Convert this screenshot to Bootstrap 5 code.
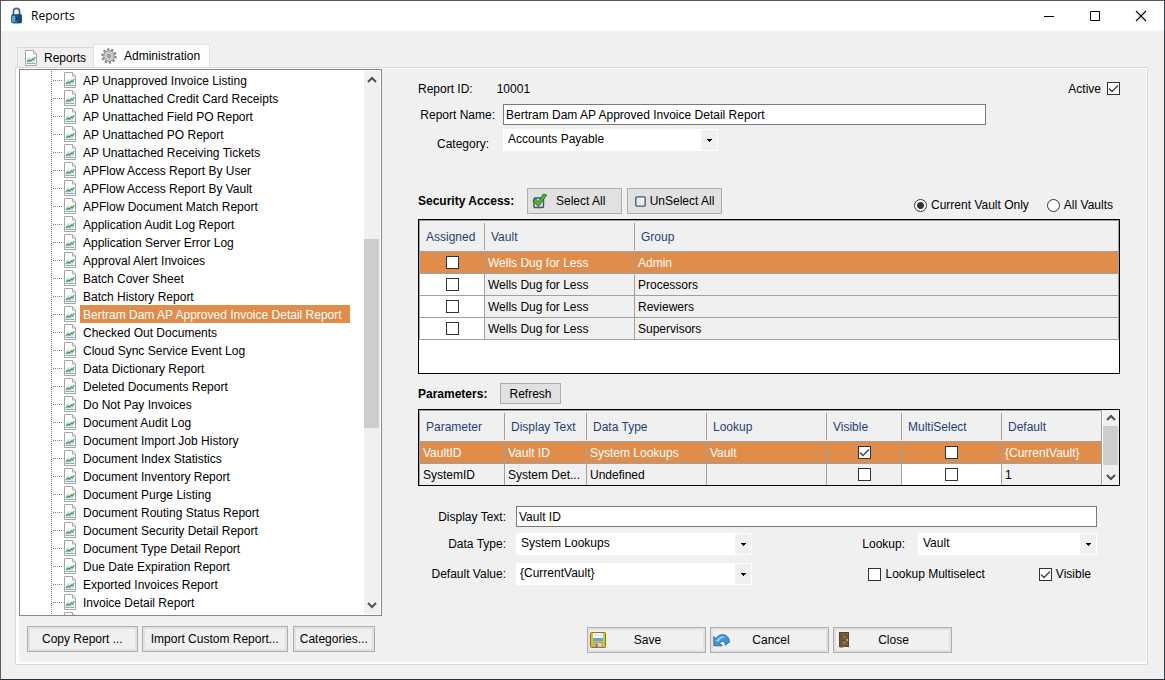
<!DOCTYPE html>
<html lang="en">
<head>
<meta charset="utf-8">
<meta name="viewport" content="width=device-width, initial-scale=1">
<title>Reports</title>
<link href="https://cdn.jsdelivr.net/npm/bootstrap@5.3.0/dist/css/bootstrap.min.css" rel="stylesheet">
<style>
:root{--face:#f0f0f0;--accent:#e08c4b;--rule:#a0a0a0}
body{font:12px/18px "Liberation Sans",Arial,sans-serif;color:#000;background:var(--face);height:100vh;overflow:hidden}
.app-window{height:100%;border:1px solid;border-color:#5b5759 #1f4260 #22343f #5f5b5e;background:var(--face)}
.title-bar{height:30px;background:#fff;padding-left:9px;font:12px/18px "Open Sans","Noto Sans",sans-serif}
.title-bar button{width:46px;height:30px;border:0;background:none;padding:0;display:flex;align-items:center;justify-content:center}
/* tabs */
.tab-strip{height:36px;padding-left:16px;border:0;flex-wrap:nowrap;align-items:flex-end}
.tab-strip .nav-link{border:1px solid #d9d9d9;border-bottom:0;border-radius:0;margin:0;color:#000;background:var(--face);height:20px;padding:0 7px;display:flex;align-items:center;gap:7px}
.tab-strip .nav-link.active{height:23px;background:#fff;color:#000;margin-left:-1px;padding:0 9px 0 7px}
.tab-body{margin:0 16px 14px 14px;border:1px solid #d9d9d9;background:var(--face);min-height:0;box-shadow:inset 3px 0 #fff,inset 0 1px #fff,inset 0 -2px #fff,inset -1px 0 #fff;padding:1px 1px 2px 3px}
/* report tree */
.side{width:363px}
.tree-box{border:1px solid #828790;background:#fff;padding:1px 1px 1px 0;min-height:0;overflow:hidden}
.tree-list{margin:0;padding:0 0 0 31px;list-style:none}
.tree-list li{height:18px;display:flex;align-items:center;padding-left:13px;background:repeating-linear-gradient(#808080 0 1px,transparent 1px 2px) 0 0/1px 100% no-repeat,repeating-linear-gradient(90deg,transparent 0 1px,#808080 1px 2px) 1px 9px/10px 1px no-repeat}
.tree-list a{color:#000;text-decoration:none;height:18px;line-height:20px;padding:0 8px 0 3px;margin-left:4px;white-space:nowrap}
.tree-list a.current{background:var(--accent);color:#fff}
.side-buttons{padding:10px 0 10px 8px}
.sbar{width:16px;background:var(--face);flex:none;display:flex;flex-direction:column}
.sbar svg{flex:none;width:16px;height:16px}
.sbar .track{flex:1;min-height:0}
.sbar .thumb{background:#cdcdcd;width:15px}
/* buttons */
.btn-cmd{border:1px solid #adadad;border-radius:0;background:#e1e1e1;color:#000;font-size:12px;line-height:18px;padding:0 6px;display:flex;align-items:center;justify-content:center;white-space:nowrap}
.btn-cmd.inset{background:var(--face);box-shadow:inset 0 0 0 2px #e1e1e1;height:26px}
.btn-cmd.wide{padding:0 14px}
.btn-cmd.mid{padding:0 8px}
.btn-cmd.tall{height:26px;width:95px}
.btn-cmd.sel{padding:0 4px;justify-content:flex-start}
.btn-cmd.small-h{height:21px;width:61px}
.btn-cmd.act{width:119px;padding:0 2px;justify-content:flex-start}
.btn-cmd.act span{flex:1;margin-right:14px}
.gap-5px{margin-left:5px}
/* fields */
.fld{border:1px solid #7a7a7a;border-radius:0;background:#fff;color:#000;font-size:12px;line-height:18px;height:21px;min-height:0;padding:0 2px}
.drop{border:1px solid #fff;border-radius:0;color:#000;font-size:12px;line-height:18px;height:22px;padding:0 20px 2px 4px;background:url("data:image/svg+xml,%3Csvg xmlns='http://www.w3.org/2000/svg' width='16' height='20'%3E%3Cpath fill='%23f0f0f0' d='M0 0h16v20H0z'/%3E%3Cpath d='M6 9h5v1h-1v1H9v1H8v-1H7v-1H6z'/%3E%3C/svg%3E") right top no-repeat #fff;background-size:16px 20px}
.drop.combo{padding-left:3px}
.tick{width:13px;height:13px;margin:0;border:1px solid #333;border-radius:0!important;background-color:#fff;flex:none;vertical-align:middle}
.tick:checked{background-color:#fff;border-color:#333;background-image:url("data:image/svg+xml,%3Csvg xmlns='http://www.w3.org/2000/svg' viewBox='0 0 11 11'%3E%3Cpath fill='none' stroke='%23444' stroke-width='1.4' d='M1 5.5 4 8.5 10 2.5'/%3E%3C/svg%3E")!important}
.dot{width:13px;height:13px;margin:0;border:1px solid #333;background-color:#fff;flex:none}
.dot:checked{background-color:#fff;border-color:#333;background-image:radial-gradient(circle,#333 3px,transparent 4px)!important}
/* detail pane */
.detail{padding:4px 26px 9px 36px;min-width:0}
.id-row{height:31px}
.active-box{gap:6px}
.l-top,.l-low{flex:none;text-align:right;white-space:nowrap}
.l-top{width:77px}
.l-low{width:88px;margin-right:10px}
.l-cat{padding:6px 6px 0 0}
.name-row{margin-right:134px}
.low-form{margin:20px 23px 0 0}
.w-cat{width:215px}.w-type{width:236px}.w-look{width:179px}
.sec-head{margin:35px 0 5px}
.sec-head b{width:109px}
.scope-all{margin-left:18px;padding-right:7px}
.par-head{margin:9px 0 5px}
.par-head b{width:82px}
.type-row{margin-top:6px}
.look-label{margin-right:13px}
.multi{margin-right:54px}
.vis{padding-right:6px}
.act-row{padding-left:1px}
/* grids */
.grid-box{border:1px solid #000;background:#fff;overflow:hidden}
.sec-box{height:155px}.par-box{height:77px}
.data-grid{width:100%;table-layout:fixed;border-collapse:separate;border-spacing:0;border-top:1px solid var(--rule);border-left:1px solid var(--rule);color:#000}
.data-grid th,.data-grid td{border-right:1px solid var(--rule);border-bottom:1px solid var(--rule);height:22px;padding:0 3px;background:var(--face);white-space:nowrap;overflow:hidden;text-overflow:ellipsis}
.data-grid th{height:31px;font-weight:400;color:#1f3f77;padding:2px 6px 0;border-right:0;background:linear-gradient(var(--rule),var(--rule)) right 2px/1px 27px no-repeat border-box var(--face)}
.data-grid th:last-child{border-right:1px solid var(--rule)}
.data-grid .pick{text-align:center;line-height:13px}
.data-grid .open{background:#fff}
.data-grid .hot td{background:var(--accent);color:#fff}
.grid-bar{width:17px}
</style>
</head>
<body>
<svg width="0" height="0" class="position-absolute" aria-hidden="true">
  <symbol id="doc" viewBox="0 0 12 16">
    <path d="M.5.5h8l3 3.500v11.500H.5z" fill="#fdfdfd" stroke="#a4a4a4"/><path d="M8.500.5v3.500h3" fill="#eee" stroke="#aaa"/>
    <path d="M2 7.500h8v6H2z" fill="#e9eef7"/>
    <path d="M2 9.500h8M2 11.500h8M4.500 7v6M7.500 7v6" stroke="#c9d3e6" stroke-width=".6"/>
    <path d="M1.500 13.500h9" stroke="#93a5d0"/>
    <path d="M2 12 4 10l1.500 1.200L7.500 9l1 .8L10.200 7" fill="none" stroke="#3f9a45" stroke-width="1.200"/>
  </symbol>
</svg>
<div class="app-window d-flex flex-column">
  <header class="title-bar d-flex align-items-center flex-shrink-0">
    <svg width="13" height="18" viewBox="0 0 13 18" aria-hidden="true"><path d="M3.500 9V4.500a3 3.200 0 0 1 6 0V9" fill="none" stroke="#4b6a80" stroke-width="1.800"/><rect x="1" y="7" width="11" height="9.500" rx="2.500" fill="#1d6699"/><path d="M2 9h3v6H2z" fill="#5aa3cf"/><path d="M8 7.500h3.500v8.500H8z" fill="#124b78"/><path d="M6 10h1.500v3H6z" fill="#0b2f4d"/></svg>
    <span class="ms-2 me-auto">Reports</span>
    <button type="button" aria-label="Minimize"><svg width="11" height="11"><path d="M0 5.500h10" stroke="#000"/></svg></button>
    <button type="button" aria-label="Maximize"><svg width="11" height="11"><path d="M.5.5h9v9h-9z" fill="none" stroke="#000"/></svg></button>
    <button type="button" aria-label="Close window"><svg width="12" height="12"><path d="M1 1l10 10M11 1 1 11" stroke="#000" stroke-width="1.100"/></svg></button>
  </header>

  <nav class="nav nav-tabs tab-strip flex-shrink-0">
    <a class="nav-link" href="#"><svg width="12" height="16"><use href="#doc"/></svg>Reports</a>
    <a class="nav-link active" href="#" aria-current="page">
      <svg width="16" height="16" viewBox="0 0 16 16" aria-hidden="true"><circle cx="8" cy="8" r="6.600" fill="none" stroke="#858585" stroke-width="2.200" stroke-dasharray="2.300 1.847"/><circle cx="8" cy="8" r="5.300" fill="#d2d2d2" stroke="#8a8a8a"/><circle cx="8" cy="8" r="3.300" fill="#efefef" stroke="#aaa" stroke-width=".8"/><circle cx="8" cy="8" r="1.600" fill="#bbb" stroke="#666" stroke-width=".8"/></svg>Administration</a>
  </nav>

  <main class="tab-body d-flex flex-grow-1">
    <section class="side d-flex flex-column flex-shrink-0">
      <div class="tree-box d-flex flex-grow-1">
        <ul class="tree-list flex-grow-1">
          <li><svg width="12" height="16"><use href="#doc"/></svg><a href="#">AP Unapproved Invoice Listing</a></li>
          <li><svg width="12" height="16"><use href="#doc"/></svg><a href="#">AP Unattached Credit Card Receipts</a></li>
          <li><svg width="12" height="16"><use href="#doc"/></svg><a href="#">AP Unattached Field PO Report</a></li>
          <li><svg width="12" height="16"><use href="#doc"/></svg><a href="#">AP Unattached PO Report</a></li>
          <li><svg width="12" height="16"><use href="#doc"/></svg><a href="#">AP Unattached Receiving Tickets</a></li>
          <li><svg width="12" height="16"><use href="#doc"/></svg><a href="#">APFlow Access Report By User</a></li>
          <li><svg width="12" height="16"><use href="#doc"/></svg><a href="#">APFlow Access Report By Vault</a></li>
          <li><svg width="12" height="16"><use href="#doc"/></svg><a href="#">APFlow Document Match Report</a></li>
          <li><svg width="12" height="16"><use href="#doc"/></svg><a href="#">Application Audit Log Report</a></li>
          <li><svg width="12" height="16"><use href="#doc"/></svg><a href="#">Application Server Error Log</a></li>
          <li><svg width="12" height="16"><use href="#doc"/></svg><a href="#">Approval Alert Invoices</a></li>
          <li><svg width="12" height="16"><use href="#doc"/></svg><a href="#">Batch Cover Sheet</a></li>
          <li><svg width="12" height="16"><use href="#doc"/></svg><a href="#">Batch History Report</a></li>
          <li><svg width="12" height="16"><use href="#doc"/></svg><a class="current" href="#">Bertram Dam AP Approved Invoice Detail Report</a></li>
          <li><svg width="12" height="16"><use href="#doc"/></svg><a href="#">Checked Out Documents</a></li>
          <li><svg width="12" height="16"><use href="#doc"/></svg><a href="#">Cloud Sync Service Event Log</a></li>
          <li><svg width="12" height="16"><use href="#doc"/></svg><a href="#">Data Dictionary Report</a></li>
          <li><svg width="12" height="16"><use href="#doc"/></svg><a href="#">Deleted Documents Report</a></li>
          <li><svg width="12" height="16"><use href="#doc"/></svg><a href="#">Do Not Pay Invoices</a></li>
          <li><svg width="12" height="16"><use href="#doc"/></svg><a href="#">Document Audit Log</a></li>
          <li><svg width="12" height="16"><use href="#doc"/></svg><a href="#">Document Import Job History</a></li>
          <li><svg width="12" height="16"><use href="#doc"/></svg><a href="#">Document Index Statistics</a></li>
          <li><svg width="12" height="16"><use href="#doc"/></svg><a href="#">Document Inventory Report</a></li>
          <li><svg width="12" height="16"><use href="#doc"/></svg><a href="#">Document Purge Listing</a></li>
          <li><svg width="12" height="16"><use href="#doc"/></svg><a href="#">Document Routing Status Report</a></li>
          <li><svg width="12" height="16"><use href="#doc"/></svg><a href="#">Document Security Detail Report</a></li>
          <li><svg width="12" height="16"><use href="#doc"/></svg><a href="#">Document Type Detail Report</a></li>
          <li><svg width="12" height="16"><use href="#doc"/></svg><a href="#">Due Date Expiration Report</a></li>
          <li><svg width="12" height="16"><use href="#doc"/></svg><a href="#">Exported Invoices Report</a></li>
          <li><svg width="12" height="16"><use href="#doc"/></svg><a href="#">Invoice Detail Report</a></li>
          <li><svg width="12" height="16"><use href="#doc"/></svg></li>
        </ul>
        <div class="sbar" aria-hidden="true">
          <svg viewBox="0 0 16 16"><path d="M4 11l4-4 4 4" fill="none" stroke="#505050" stroke-width="2"/></svg>
          <div class="track"><div style="height:29.800%"></div><div class="thumb" style="height:36.900%"></div></div>
          <svg viewBox="0 0 16 16"><path d="M4 5l4 4 4-4" fill="none" stroke="#505050" stroke-width="2"/></svg>
        </div>
      </div>
      <div class="d-flex flex-shrink-0 side-buttons">
        <button type="button" class="btn btn-cmd inset wide">Copy Report ...</button>
        <button type="button" class="btn btn-cmd inset mid ms-1">Import Custom Report...</button>
        <button type="button" class="btn btn-cmd inset gap-5px">Categories...</button>
      </div>
    </section>

    <form class="detail d-flex flex-column flex-grow-1">
      <div class="d-flex align-items-center id-row">
        <span>Report ID:</span><output class="ms-4">10001</output>
        <label class="ms-auto d-flex align-items-center active-box">Active <input type="checkbox" class="form-check-input tick" checked></label>
      </div>
      <div class="d-flex align-items-center name-row">
        <label for="rname" class="l-top me-2">Report Name:</label>
        <input id="rname" type="text" class="form-control fld" value="Bertram Dam AP Approved Invoice Detail Report">
      </div>
      <div class="d-flex align-items-start mt-1">
        <label for="cat" class="l-top l-cat me-2">Category:</label>
        <select id="cat" class="form-select drop w-cat"><option>Accounts Payable</option></select>
      </div>

      <div class="d-flex align-items-center sec-head">
        <b>Security Access:</b>
        <button type="button" class="btn btn-cmd tall sel"><svg width="16" height="16" viewBox="0 0 16 16" aria-hidden="true"><rect x="2" y="5" width="9.500" height="9.500" rx="1" fill="#d5dde8" stroke="#445268" stroke-width="1.400"/><path d="M.8 8 3.800 6l2.200 3L11.500 1l3.200 1L6.500 13.500z" fill="#4fb43a" stroke="#1f6e1b" stroke-width=".9"/></svg><span class="ms-1 ps-1">Select All</span></button>
        <button type="button" class="btn btn-cmd tall px-1 gap-5px"><svg width="11" height="11" viewBox="0 0 11 11" aria-hidden="true"><rect x=".8" y=".8" width="9.400" height="9.400" rx="1" fill="#e3e9f2" stroke="#4a5668" stroke-width="1.300"/><path d="M5 2h4v4z" fill="#fff"/></svg><span class="ms-1">UnSelect All</span></button>
        <label class="ms-auto d-flex align-items-center gap-1 pt-2"><input type="radio" name="scope" class="form-check-input dot" checked>Current Vault Only</label>
        <label class="d-flex align-items-center gap-1 pt-2 scope-all"><input type="radio" name="scope" class="form-check-input dot">All Vaults</label>
      </div>
      <div class="grid-box sec-box flex-shrink-0">
        <table class="data-grid">
          <colgroup><col style="width:65px"><col style="width:150px"><col></colgroup>
          <thead><tr><th>Assigned</th><th>Vault</th><th>Group</th></tr></thead>
          <tbody>
            <tr class="hot"><td class="pick"><input type="checkbox" class="form-check-input tick" aria-label="Assign Admin"></td><td>Wells Dug for Less</td><td>Admin</td></tr>
            <tr><td class="pick open"><input type="checkbox" class="form-check-input tick" aria-label="Assign Processors"></td><td>Wells Dug for Less</td><td>Processors</td></tr>
            <tr><td class="pick open"><input type="checkbox" class="form-check-input tick" aria-label="Assign Reviewers"></td><td>Wells Dug for Less</td><td>Reviewers</td></tr>
            <tr><td class="pick open"><input type="checkbox" class="form-check-input tick" aria-label="Assign Supervisors"></td><td>Wells Dug for Less</td><td>Supervisors</td></tr>
          </tbody>
        </table>
      </div>

      <div class="d-flex align-items-center par-head">
        <b>Parameters:</b>
        <button type="button" class="btn btn-cmd small-h">Refresh</button>
      </div>
      <div class="grid-box par-box d-flex flex-shrink-0">
        <div class="flex-grow-1 overflow-hidden">
          <table class="data-grid">
            <colgroup><col style="width:85px"><col style="width:82px"><col style="width:120px"><col><col style="width:75px"><col style="width:100px"><col style="width:100px"></colgroup>
            <thead><tr><th>Parameter</th><th>Display Text</th><th>Data Type</th><th>Lookup</th><th>Visible</th><th>MultiSelect</th><th>Default</th></tr></thead>
            <tbody>
              <tr class="hot"><td>VaultID</td><td>Vault ID</td><td>System Lookups</td><td>Vault</td><td class="pick"><input type="checkbox" class="form-check-input tick" checked aria-label="VaultID visible"></td><td class="pick"><input type="checkbox" class="form-check-input tick" aria-label="VaultID multiselect"></td><td>{CurrentVault}</td></tr>
              <tr><td>SystemID</td><td>System Det...</td><td>Undefined</td><td></td><td class="pick"><input type="checkbox" class="form-check-input tick" aria-label="SystemID visible"></td><td class="pick open"><input type="checkbox" class="form-check-input tick" aria-label="SystemID multiselect"></td><td>1</td></tr>
            </tbody>
          </table>
        </div>
        <div class="sbar grid-bar border-start border-white" aria-hidden="true">
          <svg viewBox="0 0 16 16"><path d="M4 10l4-4 4 4" fill="none" stroke="#505050" stroke-width="2"/></svg>
          <div class="track"><div class="thumb" style="height:90%"></div></div>
          <svg viewBox="0 0 16 16"><path d="M4 6l4 4 4-4" fill="none" stroke="#505050" stroke-width="2"/></svg>
        </div>
      </div>

      <div class="low-form">
        <div class="d-flex align-items-center">
          <label for="dtext" class="l-low">Display Text:</label>
          <input id="dtext" type="text" class="form-control fld" value="Vault ID">
        </div>
        <div class="d-flex align-items-center type-row">
          <label for="dtype" class="l-low">Data Type:</label>
          <select id="dtype" class="form-select drop w-type"><option>System Lookups</option></select>
          <label for="look" class="ms-auto look-label">Lookup:</label>
          <select id="look" class="form-select drop w-look"><option>Vault</option></select>
        </div>
        <div class="d-flex align-items-center mt-2">
          <label for="defv" class="l-low">Default Value:</label>
          <select id="defv" class="form-select drop combo w-type"><option>{CurrentVault}</option></select>
          <label class="ms-auto d-flex align-items-center gap-1 multi"><input type="checkbox" class="form-check-input tick">Lookup Multiselect</label>
          <label class="d-flex align-items-center gap-1 vis"><input type="checkbox" class="form-check-input tick" checked>Visible</label>
        </div>
      </div>

      <div class="d-flex justify-content-center gap-1 mt-auto act-row">
        <button type="submit" class="btn btn-cmd inset act"><svg width="16" height="16" viewBox="0 0 16 16" aria-hidden="true"><rect x=".5" y=".5" width="15" height="15" rx="1" fill="#d9c13a" stroke="#8a7420"/><path d="M3 1h10v5H3z" fill="#f4f9fd"/><path d="M3 6h10v3H3z" fill="#5fa8dc"/><path d="M4 3h8" stroke="#b9d3e6"/><path d="M4 10.500h8V15H4z" fill="#d8d8d4" stroke="#8d8766" stroke-width=".6"/><path d="M5.500 11.500h2V15h-2z" fill="#8a7420"/></svg><span>Save</span></button>
        <button type="button" class="btn btn-cmd inset act"><svg width="17" height="16" viewBox="0 0 17 16" aria-hidden="true"><path d="M.8 4.500v9.300h8.400L6.800 11.300c1.600-2.800 4.200-2.600 5.200-.3.300.8.300 1.500.2 2.200l3.200-2.500 1-.3C16.500 5.500 13 2.500 9.500 2.700 6.500 2.800 4.500 4 3 6.800z" fill="#3f93d8" stroke="#2b659d" stroke-width=".9"/><path d="M2 8.500 4 7.800C6 4 10.500 3 13.500 5.800 10 5 7.500 6.500 5.500 10z" fill="#9accf3"/></svg><span>Cancel</span></button>
        <button type="button" class="btn btn-cmd inset act"><svg width="16" height="16" viewBox="0 0 16 16" aria-hidden="true"><path d="M3 0h10v15H3z" fill="#4a4640"/><path d="M4.500 1 12 1v13l-7.500 2z" fill="#7d6234"/><path d="M6 3h4.500v4H6zM6 8.500h4.500V13L6 13.500z" fill="#8f7342" stroke="#54401f" stroke-width=".7"/><path d="M10 8h2" stroke="#e9e3c6"/></svg><span>Close</span></button>
      </div>
    </form>
  </main>
</div>
<script src="https://cdn.jsdelivr.net/npm/bootstrap@5.3.0/dist/js/bootstrap.bundle.min.js"></script>
</body>
</html>
